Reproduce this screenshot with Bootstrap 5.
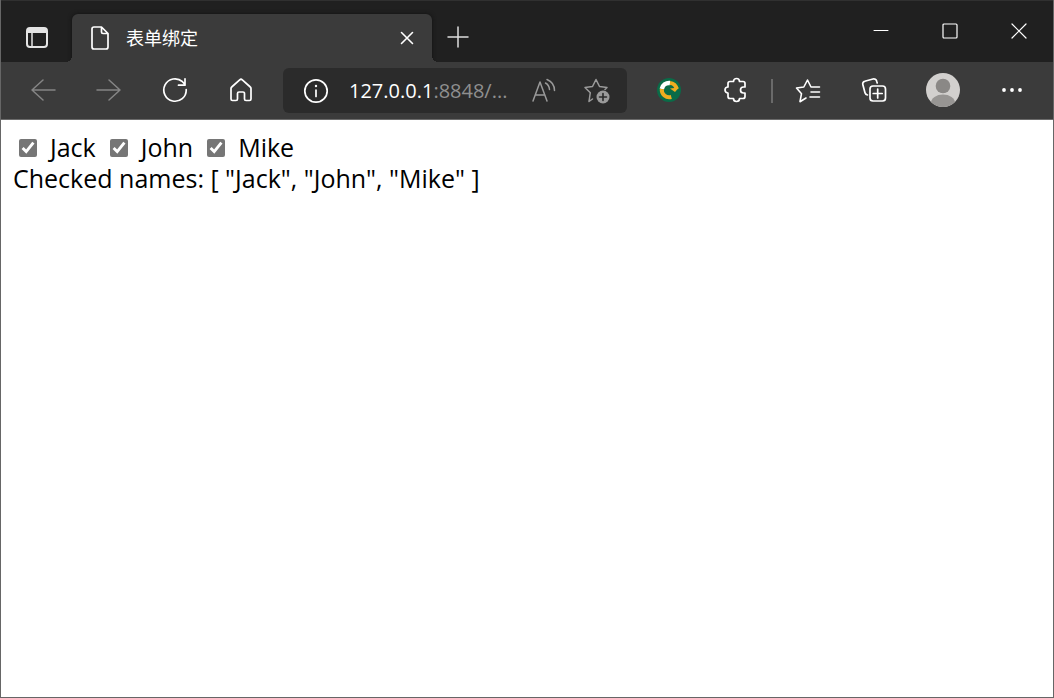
<!DOCTYPE html>
<html lang="zh-CN">
<head>
<meta charset="utf-8">
<meta name="viewport" content="width=device-width, initial-scale=1">
<title>表单绑定</title>
<link href="https://cdn.jsdelivr.net/npm/bootstrap@5.3.0/dist/css/bootstrap.min.css" rel="stylesheet">
<style>
  :root { --strip: #202020; --bar: #3b3b3b; --field: #2b2b2b; }
  body { font-family: "Open Sans", "Noto Sans CJK SC", sans-serif; color: #000; }
  .window { border: solid #666; border-width: 0 1px 1px; }
  .tab-strip { background: var(--strip); height: 62px; box-shadow: inset 0 1px #303030; }
  .icon-btn { background: none; border: 0; padding: 0; color: #fff; display: flex; align-items: center; justify-content: center; flex: none; width: 66px; }
  .icon-btn svg, .field svg { fill: none; stroke: currentColor; stroke-width: 2; stroke-linecap: round; stroke-linejoin: round; }
  .icon-btn:disabled { color: #858585; }
  .tabs-btn { width: 71px; padding-top: 12px; }
  .page-tab { background: var(--bar); width: 360px; height: 48px; padding: 0 13px 0 18px; border-radius: 6px 6px 0 0; color: #fff; font-size: 18px; box-shadow: 0 0 4px #111; }
  .page-tab::before, .page-tab::after { content: ""; position: absolute; bottom: 0; width: 6px; height: 6px; }
  .page-tab::before { right: 100%; background: radial-gradient(circle at 0 0, transparent 6px, var(--bar) 6px); }
  .page-tab::after { left: 100%; background: radial-gradient(circle at 100% 0, transparent 6px, var(--bar) 6px); }
  .tab-close { width: 24px; height: 24px; }
  .new-tab { width: 51px; padding-top: 12px; color: #ddd; }
  .win-btn { width: 69px; }
  .toolbar { background: var(--bar); height: 58px; padding: 0 8px 0 9px; border-bottom: 1px solid #6b6b6b; }
  .toolbar > .icon-btn { padding-bottom: 2px; }
  .field { background: var(--field); height: 45px; margin: 0 9px; padding: 0 16px 0 20px; border-radius: 6px; color: #fff; min-width: 0; }
  .url { font-size: 20px; margin-left: 20px; color: #8f8f8f; text-decoration: none; white-space: nowrap; }
  .url span { color: #fff; }
  .field .icon-btn { color: #9a9a9a; width: 28px; }
  .divider { width: 7px; }
  .divider::before { content: ""; display: block; width: 2px; height: 24px; margin: 0 auto; background: #6a6a6a; }
  .toolbar > .profile { width: 72px; }
  .content { padding: 12px; font-size: 25px; line-height: 31px; }
  .name-box { width: 18px; height: 18px; margin: 0 13px 0 0; accent-color: #767676; }
  .names { padding-left: 6px; gap: 14px; }
</style>
</head>
<body class="bg-white">
<div class="window d-flex flex-column min-vh-100">
  <header>
    <div class="tab-strip d-flex align-items-end">
      <button class="icon-btn tabs-btn align-self-stretch" type="button" aria-label="Tab actions">
        <svg width="24" height="24" viewBox="0 0 24 24" style="color:#e4e4e4"><rect x="2" y="3" width="20" height="19" rx="3"/><path d="M3 4h18v3H3z" fill="currentColor"/><path d="M7 8v14" stroke-width="1.5"/></svg>
      </button>
      <div class="page-tab d-flex align-items-center position-relative">
        <svg width="20" height="26" viewBox="0 0 20 26" fill="none" stroke="#fff" stroke-width="1.7" stroke-linejoin="round"><path d="M4 2h7.5L18 8.500V22a2 2 0 0 1-2 2H4a2 2 0 0 1-2-2V4a2 2 0 0 1 2-2zM11.500 2v5a1.500 1.500 0 0 0 1.500 1.500h5"/></svg>
        <span class="ms-3 flex-fill">表单绑定</span>
        <button class="icon-btn tab-close" type="button" aria-label="Close tab"><svg width="14" height="14" viewBox="0 0 14 14"><path d="M1.500 1.500l11 11M12.500 1.500l-11 11" stroke-width="1.6"/></svg></button>
      </div>
      <button class="icon-btn new-tab align-self-stretch" type="button" aria-label="New tab"><svg width="22" height="22" viewBox="0 0 22 22"><path d="M11 1v20M1 11h20" stroke-width="1.5"/></svg></button>
      <div class="d-flex align-self-stretch ms-auto">
        <button class="icon-btn win-btn" type="button" aria-label="Minimize"><svg width="16" height="16" viewBox="0 0 16 16"><path d="M1 7.500h14" stroke-width="1"/></svg></button>
        <button class="icon-btn win-btn" type="button" aria-label="Maximize"><svg width="16" height="16" viewBox="0 0 16 16"><rect x="1" y="1" width="14" height="14" rx="1" stroke-width="1.2"/></svg></button>
        <button class="icon-btn win-btn" type="button" aria-label="Close"><svg width="16" height="16" viewBox="0 0 16 16"><path d="M1 1l14 14M15 1L1 15" stroke-width="1.2"/></svg></button>
      </div>
    </div>
    <nav class="toolbar d-flex align-items-center position-relative" aria-label="Browser">
      <button class="icon-btn" type="button" disabled aria-label="Back"><svg width="26" height="24" viewBox="0 0 26 24"><path d="M25 12H2M13 2L2 12l11 10" stroke-width="1.5"/></svg></button>
      <button class="icon-btn" type="button" disabled aria-label="Forward"><svg width="26" height="24" viewBox="0 0 26 24"><path d="M1 12h23M13 2l11 10-11 10" stroke-width="1.5"/></svg></button>
      <button class="icon-btn" type="button" aria-label="Refresh"><svg width="26" height="26" viewBox="0 0 26 26"><path d="M24.200 12.500A11.200 11.200 0 1 1 20.500 4.700L23 7.500M23 1.800v6.400h-6.500" stroke-width="1.7"/></svg></button>
      <button class="icon-btn" type="button" aria-label="Home"><svg width="24" height="26" viewBox="0 0 24 26"><path d="M2 11.500a2 2 0 0 1 .7-1.500l8-7.200a2 2 0 0 1 2.600 0l8 7.200a2 2 0 0 1 .7 1.500V22a1.500 1.500 0 0 1-1.500 1.500H17a1.500 1.500 0 0 1-1.500-1.500v-5.500A1.500 1.500 0 0 0 14 15h-4a1.500 1.500 0 0 0-1.500 1.500V22A1.500 1.500 0 0 1 7 23.500H3.500A1.500 1.500 0 0 1 2 22z" stroke-width="1.700"/></svg></button>
      <div class="field d-flex align-items-center flex-fill">
        <svg width="26" height="26" viewBox="0 0 26 26"><circle cx="13" cy="13" r="11.200" stroke-width="1.700"/><path d="M13 12v6.500" stroke-width="1.700"/><circle cx="13" cy="8" r=".5" stroke-width="1.400"/></svg>
        <a class="url" href="#"><span>127.0.0.1</span>:8848/...</a>
        <button class="icon-btn ms-auto" type="button" aria-label="Read aloud"><svg width="26" height="26" viewBox="0 0 26 26"><path d="M1 23L8 4l7 19M3.500 17h9M13.500 5a8 8 0 0 1 4 6.500M15 1.500a12 12 0 0 1 7.500 11" stroke-width="1.500"/></svg></button>
        <button class="icon-btn ms-4" type="button" aria-label="Add to favorites"><svg width="28" height="28" viewBox="0 0 28 28"><path d="M9.500 22L6 24.500l1.300-8.800L2 10.500l7.500-1L13 2.500l3.500 7 7.500 1-2 2" stroke-width="1.500"/><circle cx="20" cy="20" r="6.500" fill="currentColor" stroke="none"/><path d="M20 16.500v7M16.500 20h7" stroke="#2b2b2b" stroke-width="1.600"/></svg></button>
      </div>
      <button class="icon-btn" type="button" aria-label="Extension"><svg width="24" height="24" viewBox="0 0 24 24"><circle cx="12" cy="12" r="12" fill="#0a6b48" stroke="none"/><path d="M4.800 11A7.500 7.500 0 0 1 13 5" stroke="#fff" stroke-width="4.500" stroke-linecap="butt"/><path d="M13 5a7 7 0 0 1 6.500 6M4.800 11a7.500 7.500 0 0 0 9.500 8" stroke="#f0ad20" stroke-width="4" stroke-linecap="butt"/><path d="M22 9.500l-4 4.500-5-3.500z" fill="#f0ad20" stroke="none"/></svg></button>
      <button class="icon-btn" type="button" aria-label="Extensions"><svg width="26" height="26" viewBox="0 0 26 26"><path d="M8 4.500h3.500a3 3 0 0 1 6 0H21a2 2 0 0 1 2 2V10h-1.500a3 3 0 0 0 0 6H23v3.500a2 2 0 0 1-2 2h-3.500a3 3 0 0 1-6 0H8a2 2 0 0 1-2-2V16a3 3 0 0 1 0-6V6.500a2 2 0 0 1 2-2z" stroke-width="1.700"/></svg></button>
      <span class="divider"></span>
      <button class="icon-btn" type="button" aria-label="Favorites"><svg width="26" height="26" viewBox="0 0 26 26"><path d="M11 21l-6 3.700 1.500-8L1.500 11l7.300-1L12.500 3 16 10h8.500M16 15h8.500M15 20h9.500" stroke-width="1.600"/></svg></button>
      <button class="icon-btn" type="button" aria-label="Collections"><svg width="26" height="26" viewBox="0 0 26 26"><path d="M6.500 18a3 3 0 0 1-2.500-2.200L1.800 7.500A2.600 2.600 0 0 1 3.700 4.300L12 2a3 3 0 0 1 3.700 2.200l.5 1.800" stroke-width="1.700"/><rect x="9" y="9" width="15.500" height="15" rx="3" stroke-width="1.700"/><path d="M16.700 12v9M12.200 16.500h9" stroke-width="1.700"/></svg></button>
      <button class="icon-btn profile" type="button" aria-label="Profile"><svg width="34" height="34" viewBox="0 0 34 34"><defs><clipPath id="face"><circle cx="17" cy="17" r="17"/></clipPath></defs><g stroke="none" clip-path="url(#face)"><path d="M0 0h34v34H0z" fill="#d2d0ce"/><circle cx="17" cy="13" r="7.300" fill="#8a8886"/><ellipse cx="17" cy="30" rx="12" ry="8.500" fill="#979593"/></g></svg></button>
      <button class="icon-btn" type="button" aria-label="Settings and more"><svg width="20" height="6" viewBox="0 0 20 6"><g fill="currentColor" stroke="none"><circle cx="2" cy="3" r="1.900"/><circle cx="10" cy="3" r="1.900"/><circle cx="18" cy="3" r="1.900"/></g></svg></button>
    </nav>
  </header>
  <main class="content flex-fill">
    <div class="names d-flex flex-wrap">
      <label class="d-flex align-items-center"><input class="name-box" type="checkbox" checked>Jack</label>
      <label class="d-flex align-items-center"><input class="name-box" type="checkbox" checked>John</label>
      <label class="d-flex align-items-center"><input class="name-box" type="checkbox" checked>Mike</label>
    </div>
    <div>Checked names: [ "Jack", "John", "Mike" ]</div>
  </main>
</div>
<script src="https://cdn.jsdelivr.net/npm/bootstrap@5.3.0/dist/js/bootstrap.bundle.min.js"></script>
</body>
</html>
